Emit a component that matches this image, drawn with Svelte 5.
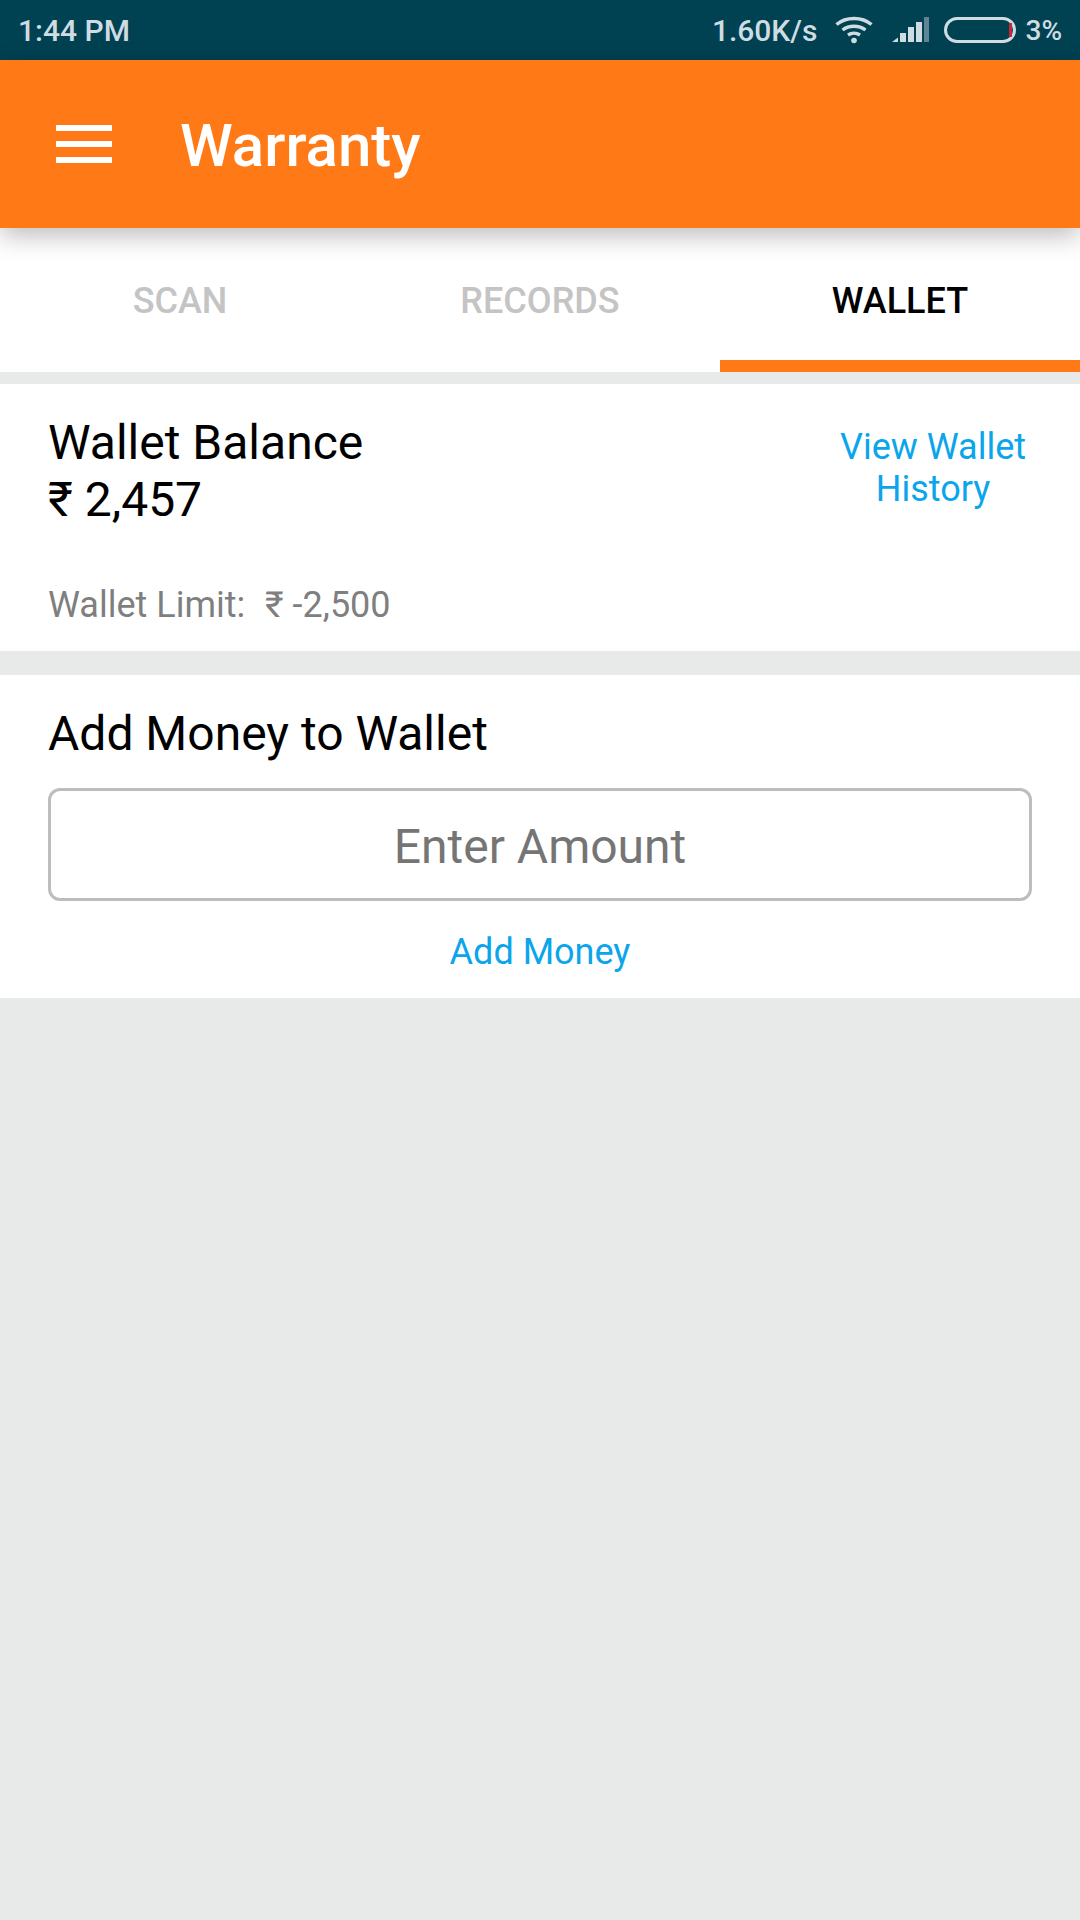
<script lang="ts">
	const tabs = [
		{ label: 'SCAN', active: false },
		{ label: 'RECORDS', active: false },
		{ label: 'WALLET', active: true },
	];
</script>

<div class="screen">
	<div class="statusbar">
		<span class="time">1:44 PM</span>
		<div class="status-right">
			<span class="speed">1.60K/s</span>
			<svg class="wifi" width="38" height="28" viewBox="0 0 38 28" fill="none" stroke="#cfdde3" stroke-width="3.4">
				<path d="M1.5 8.5 C11 0.5 27 0.5 36.5 8.5" />
				<path d="M7.5 14 C14 9 24 9 30.5 14" />
				<path d="M13 19 C16.5 16.6 21.5 16.6 25 19" />
				<circle cx="19" cy="24.5" r="2.8" fill="#cfdde3" stroke="none" />
			</svg>
			<svg class="signal" width="38" height="28" viewBox="0 0 38 28">
				<path d="M1 26 L7 21.5 V26 Z" fill="#cfdde3" />
				<rect x="9" y="17" width="6" height="9" fill="#cfdde3" />
				<rect x="17" y="11" width="6" height="15" fill="#cfdde3" />
				<rect x="25" y="6" width="6" height="20" fill="#cfdde3" />
				<rect x="33" y="1" width="5" height="25" fill="#5f8592" />
			</svg>
			<div class="battery"><span class="charge"></span></div>
			<span class="percent">3%</span>
		</div>
	</div>

	<header class="appbar">
		<div class="menu"><span></span><span></span><span></span></div>
		<h1>Warranty</h1>
	</header>

	<nav class="tabs">
		{#each tabs as tab}
			<div class="tab" class:active={tab.active}>{tab.label}</div>
		{/each}
	</nav>

	<section class="card balance">
		<div class="balance-top">
			<div class="balance-text">
				<div>Wallet Balance</div>
				<div>₹ 2,457</div>
			</div>
			<div class="history">View Wallet<br />History</div>
		</div>
		<div class="limit">Wallet Limit:&nbsp; <span class="limit-value">₹ -2,500</span></div>
	</section>

	<section class="card add">
		<div class="add-title">Add Money to Wallet</div>
		<div class="amount">Enter Amount</div>
		<div class="add-link">Add Money</div>
	</section>
</div>

<style>
	:global(body) {
		margin: 0;
		background: #e8eaea;
	}

	.screen {
		width: 1080px;
		height: 1920px;
		overflow: hidden;
		background: #e8eaea;
		font-family: Roboto, 'Noto Sans', sans-serif;
	}

	.statusbar {
		height: 60px;
		background: #004152;
		color: #cfdde3;
		display: flex;
		align-items: center;
		justify-content: space-between;
		padding: 0 18px;
		font-size: 30px;
		font-weight: 500;
	}

	.status-right {
		display: flex;
		align-items: center;
	}

	.wifi {
		margin-left: 18px;
	}

	.signal {
		margin-left: 18px;
	}

	.battery {
		width: 66px;
		height: 20px;
		margin-left: 15px;
		border: 3px solid #cfdde3;
		border-radius: 13px;
		position: relative;
	}

	.charge {
		position: absolute;
		right: 1px;
		top: 3px;
		width: 3px;
		height: 14px;
		background: #c8263c;
	}

	.percent {
		margin-left: 9px;
		font-size: 28px;
	}

	.appbar {
		position: relative;
		height: 168px;
		background: #ff7a17;
		display: flex;
		align-items: center;
		padding-left: 56px;
		box-shadow: 0 8px 24px rgba(0, 0, 0, 0.26);
	}

	.menu {
		width: 56px;
		display: flex;
		flex-direction: column;
		gap: 10px;
	}

	.menu span {
		height: 6px;
		background: #fff;
	}

	h1 {
		margin: 3px 0 0 68px;
		color: #fff;
		font-size: 60px;
		font-weight: 500;
	}

	.tabs {
		height: 144px;
		background: #fff;
		display: grid;
		grid-template-columns: repeat(3, 1fr);
	}

	.tab {
		display: flex;
		align-items: center;
		justify-content: center;
		padding-top: 2px;
		box-sizing: border-box;
		color: #c4c4c4;
		font-size: 36px;
		font-weight: 500;
	}

	.tab.active {
		color: #000;
		border-bottom: 12px solid #ff7a17;
		padding-top: 14px;
	}

	.card {
		background: #fff;
	}

	.balance {
		height: 267px;
		margin-top: 12px;
		padding: 30px 48px 0;
		box-sizing: border-box;
	}

	.balance-top {
		display: flex;
		justify-content: space-between;
	}

	.balance-text {
		color: #000;
		font-size: 48px;
		line-height: 57px;
	}

	.history {
		width: 190px;
		margin: 12px 4px 0 0;
		color: #0ba5ec;
		font-size: 36px;
		line-height: 42px;
		text-align: center;
		white-space: nowrap;
	}

	.limit {
		margin-top: 56px;
		color: #7f7f7f;
		font-size: 36px;
		line-height: 42px;
	}

	.limit-value {
		margin-left: 2px;
	}

	.add {
		height: 323px;
		margin-top: 24px;
		padding: 32px 48px 0;
		box-sizing: border-box;
	}

	.add-title {
		color: #000;
		font-size: 48px;
		line-height: 54px;
	}

	.amount {
		height: 113px;
		margin-top: 27px;
		padding-top: 3px;
		box-sizing: border-box;
		border: 3px solid #bdbdbd;
		border-radius: 12px;
		display: flex;
		align-items: center;
		justify-content: center;
		color: #757575;
		font-size: 48px;
	}

	.add-link {
		margin-top: 30px;
		color: #0ba5ec;
		font-size: 36px;
		line-height: 42px;
		text-align: center;
	}
</style>
